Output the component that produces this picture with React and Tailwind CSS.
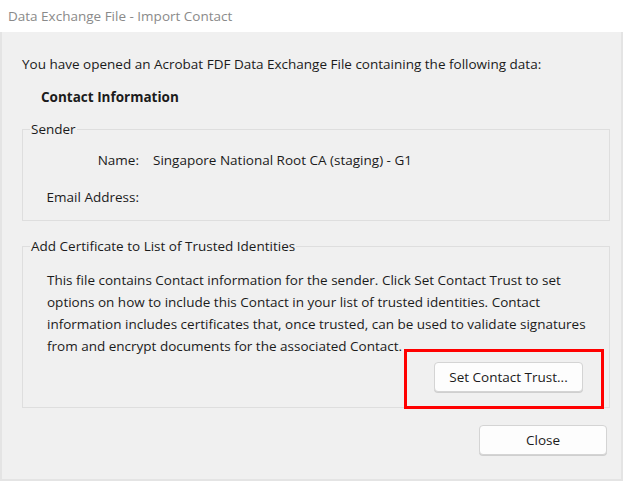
import React from "react";

function Button({ children, className = "" }) {
  return (
    <button
      className={
        "h-[30px] rounded-[4px] border border-[#d4d4d4] bg-[#fdfdfd] text-[13.5px] text-[#1b1b1b] shadow-[0_1px_0_#cfcfcf] " +
        className
      }
    >
      {children}
    </button>
  );
}

export default function App() {
  return (
    <div
      className="flex h-[481px] w-[623px] flex-col overflow-hidden bg-white text-[#1b1b1b]"
      style={{ fontFamily: '"Open Sans", "Noto Sans", sans-serif' }}
    >
      {/* title bar */}
      <div className="flex h-[32px] items-center bg-white pl-[8px] text-[13.5px] text-[#8a8a8a]">
        Data Exchange File - Import Contact
      </div>

      {/* dialog body */}
      <div className="relative flex flex-1 flex-col border-l-2 border-r-2 border-b-2 border-[#e4e4e4] bg-[#f0f0f0] pl-[20px] pr-[11px] pt-[22px] text-[13.5px] leading-[20px]">
        <p>
          You have opened an Acrobat FDF Data Exchange File containing the following data:
        </p>
        <p className="mt-[13px] pl-[19px] font-bold">Contact Information</p>

        <fieldset className="mt-[12px] border border-[#dedede] pb-[13px]">
          <legend className="ml-[7px] px-[1px]">Sender</legend>
          <div className="mt-[11px] grid grid-cols-[116px_1fr] gap-x-[14px] gap-y-[17px]">
            <span className="text-right">Name:</span>
            <span>Singapore National Root CA (staging) - G1</span>
            <span className="text-right">Email Address:</span>
            <span></span>
          </div>
        </fieldset>

        <fieldset className="mt-[15px] border border-[#dedede] pb-[15px]">
          <legend className="ml-[7px] px-[1px]">Add Certificate to List of Trusted Identities</legend>
          <p className="mt-[13px] pl-[24px] leading-[22px]">
            This file contains Contact information for the sender. Click Set Contact Trust to set
            <br />
            options on how to include this Contact in your list of trusted identities. Contact
            <br />
            information includes certificates that, once trusted, can be used to validate signatures
            <br />
            from and encrypt documents for the associated Contact.
          </p>
          <div className="mt-[5px] flex justify-end pr-[26px]">
            <Button className="w-[149px]">Set Contact Trust...</Button>
          </div>
        </fieldset>

        <div className="mt-[17px] flex justify-end pr-[3px]">
          <Button className="w-[128px]">Close</Button>
        </div>

        {/* red annotation box */}
        <div className="pointer-events-none absolute left-[402px] top-[317px] h-[60px] w-[200px] border-[3px] border-[#ff0000]"></div>
      </div>
    </div>
  );
}
